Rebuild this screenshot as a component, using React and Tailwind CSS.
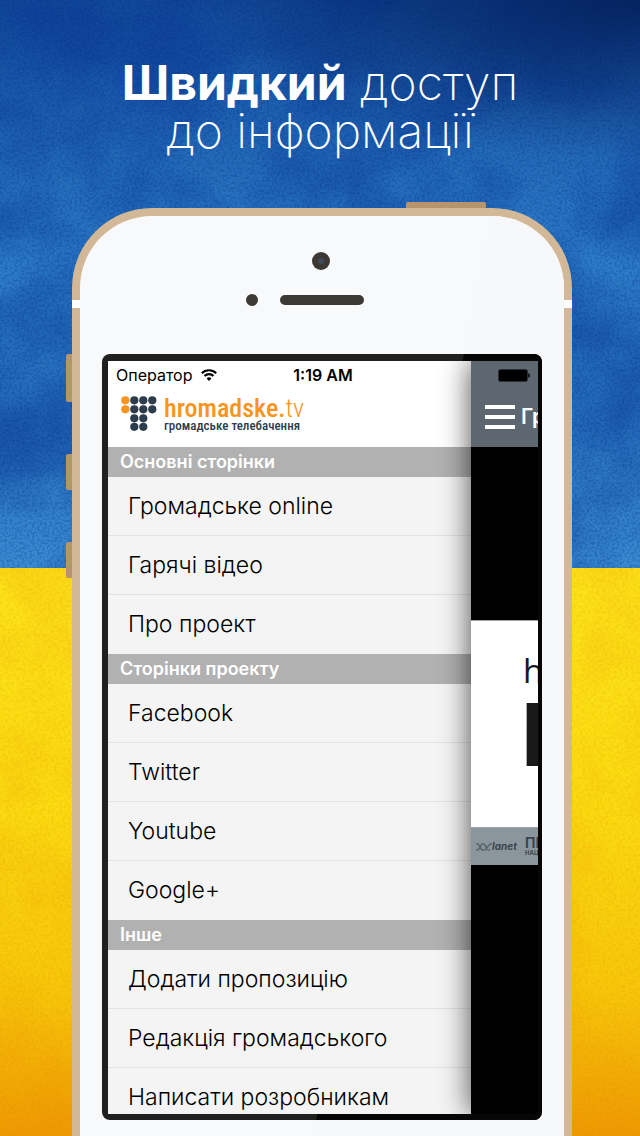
const sections = [
  { title: "Основні сторінки", items: ["Громадське online", "Гарячі відео", "Про проект"] },
  { title: "Сторінки проекту", items: ["Facebook", "Twitter", "Youtube", "Google+"] },
  { title: "Інше", items: ["Додати пропозицію", "Редакція громадського", "Написати розробникам"] },
];

function FlagBackdrop() {
  return (
    <svg className="absolute inset-0 h-full w-full" aria-hidden="true">
      <defs>
        <linearGradient id="blue" x1="0" y1="0" x2="0" y2="1">
          <stop offset="0" stopColor="#124a9c" />
          <stop offset="0.15" stopColor="#1c5dae" />
          <stop offset="0.45" stopColor="#2d7dca" />
          <stop offset="0.75" stopColor="#276fbe" />
          <stop offset="1" stopColor="#3a8cd4" />
        </linearGradient>
        <linearGradient id="yellow" x1="0" y1="0" x2="0" y2="1">
          <stop offset="0" stopColor="#fce41a" />
          <stop offset="0.4" stopColor="#fbdc12" />
          <stop offset="0.75" stopColor="#f7c60a" />
          <stop offset="1" stopColor="#ee9a04" />
        </linearGradient>
        <radialGradient id="corner" cx="1" cy="0" r="0.7">
          <stop offset="0" stopColor="#021a52" stopOpacity="0.8" />
          <stop offset="1" stopColor="#021a52" stopOpacity="0" />
        </radialGradient>
        <filter id="blotches" x="0" y="0" width="100%" height="100%" colorInterpolationFilters="sRGB">
          <feTurbulence type="fractalNoise" baseFrequency="0.01" numOctaves="6" seed="8" />
          <feColorMatrix values="0 0 0 0 0.03  0 0 0 0 0.22  0 0 0 0 0.58  2.6 0 0 0 -0.9" />
        </filter>
        <filter id="warm" x="0" y="0" width="100%" height="100%" colorInterpolationFilters="sRGB">
          <feTurbulence type="fractalNoise" baseFrequency="0.012" numOctaves="6" seed="3" />
          <feColorMatrix values="0 0 0 0 0.93  0 0 0 0 0.58  0 0 0 0 0  3 0 0 0 -1.2" />
        </filter>
        <filter id="grain" x="0" y="0" width="100%" height="100%" colorInterpolationFilters="sRGB">
          <feTurbulence type="fractalNoise" baseFrequency="0.4" numOctaves="3" seed="5" />
          <feColorMatrix values="0 0 0 0 0.02  0 0 0 0 0.15  0 0 0 0 0.45  3 0 0 0 -1.2" />
        </filter>
        <filter id="warmGrain" x="0" y="0" width="100%" height="100%" colorInterpolationFilters="sRGB">
          <feTurbulence type="fractalNoise" baseFrequency="0.35" numOctaves="3" seed="9" />
          <feColorMatrix values="0 0 0 0 0.85  0 0 0 0 0.5  0 0 0 0 0  3 0 0 0 -1.2" />
        </filter>
      </defs>
      <rect width="100%" height="50%" fill="url(#blue)" />
      <rect y="50%" width="100%" height="50%" fill="url(#yellow)" />
      <rect width="100%" height="50%" filter="url(#blotches)" opacity="0.45" />
      <rect width="100%" height="50%" filter="url(#grain)" opacity="0.25" />
      <rect width="100%" height="20%" fill="url(#corner)" />
      <rect y="50%" width="100%" height="50%" filter="url(#warm)" opacity="0.18" />
      <rect y="50%" width="100%" height="50%" filter="url(#warmGrain)" opacity="0.14" />
    </svg>
  );
}

function Wifi() {
  return (
    <svg className="h-3 w-4" viewBox="0 0 16 12" fill="none" stroke="#000" strokeWidth="2.1" aria-hidden="true">
      <path d="M0.8 4.2a10.2 10.2 0 0 1 14.4 0" />
      <path d="M3.5 7a6.4 6.4 0 0 1 9 0" />
      <path d="M8 12L5.6 9.5a3.4 3.4 0 0 1 4.8 0z" fill="#000" stroke="none" />
    </svg>
  );
}

const dots = [
  [4, 4], [13, 4], [22, 4], [31, 4],
  [4, 13], [13, 13], [22, 13], [31, 13],
  [13, 22], [22, 22],
  [13, 30.5], [22, 30.5],
];

function Logo() {
  return (
    <div className="flex gap-[7px] pl-[13px]">
      <svg className="h-[35px] w-9" viewBox="0 0 36 35" aria-hidden="true">
        {dots.map(([x, y]) => (
          <circle key={`${x}-${y}`} cx={x + 0.3} cy={y + 0.3} r="4.1" fill={x === 4 ? "#f7941d" : "#2d3c4c"} />
        ))}
      </svg>
      <div className="whitespace-nowrap font-['Roboto_Condensed','Liberation_Sans_Narrow','Roboto',sans-serif] text-[#2d3c4c]">
        <p className="text-[26px] leading-[24px] font-medium text-[#f7941d]">
          hromadske.<span className="font-light">tv</span>
        </p>
        <p className="text-[13px] leading-[12px] font-medium">громадське телебачення</p>
      </div>
    </div>
  );
}

function Menu() {
  return (
    <nav className="min-w-0 flex-1 bg-[#f4f4f4]">
      <header className="h-[86px] bg-white">
        <div className="flex h-7 items-center gap-[9px] pl-2 text-[16px]">
          Оператор <Wifi />
        </div>
        <div className="pt-[7px]">
          <Logo />
        </div>
      </header>
      {sections.map((s) => (
        <section key={s.title}>
          <h2 className="h-[30px] bg-[#b1b1b1] pl-3 text-[18px] leading-[30px] font-semibold text-white">{s.title}</h2>
          <ul>
            {s.items.map((item) => (
              <li key={item} className="h-[59px] border-b border-[#e2e2e2] last:border-b-0">
                <a href="#" className="block pl-5 text-[23px] leading-[59px] font-light whitespace-nowrap text-black">
                  {item}
                </a>
              </li>
            ))}
          </ul>
        </section>
      ))}
    </nav>
  );
}

function Page() {
  return (
    <div className="flex w-[67px] shrink-0 flex-col overflow-hidden bg-black shadow-[0_0_30px_rgba(0,0,0,0.7)]">
      <header className="h-[86px] shrink-0 bg-[#5e676f]">
        <div className="flex h-7 items-center justify-end pr-2">
          <svg className="h-[13px] w-8" viewBox="0 0 32 13" aria-hidden="true">
            <rect x="0.5" y="0.5" width="29" height="12" rx="2" fill="#000" stroke="#2b2f33" />
            <path d="M30 4.5h1a1 1 0 0 1 1 1v2a1 1 0 0 1-1 1h-1z" fill="#16181b" />
          </svg>
        </div>
        <div className="flex h-14 items-center gap-[6px] pl-[14px] text-white">
          <button type="button" aria-label="Меню" className="flex w-[30px] shrink-0 flex-col gap-[6px]">
            <span className="h-1 bg-white" />
            <span className="h-1 bg-white" />
            <span className="h-1 bg-white" />
          </button>
          <h2 className="text-[21px] font-semibold">Гр</h2>
        </div>
      </header>
      <div className="mt-[173px] flex h-[208px] shrink-0 flex-col border-y border-[#a5a0a2] bg-white text-[#111b26]">
        <p className="pt-[30px] pl-[52px] font-['Open_Sans',sans-serif] text-[33px] leading-[40px]">h</p>
        <p className="pl-[50px] text-[86px] leading-[88px] font-bold text-[#191919]">N</p>
      </div>
      <div className="flex h-[37px] shrink-0 items-center gap-2 bg-[#8b969c] pl-[5px] text-[#3a454d]">
        <p className="flex w-[41px] shrink-0 items-center text-[10px] font-bold italic">
          <svg className="h-2 w-4" viewBox="0 0 16 8" fill="none" stroke="#59656d" strokeWidth="1.5" aria-hidden="true">
            <path d="M0 1h2l4 6h2M0 7h2l4-6h2M8 1l4 6h2M7 7h2l5-6h2" />
          </svg>
          lanet
        </p>
        <div className="font-bold">
          <p className="text-[14px] leading-[12px]">ПЕ</p>
          <p className="text-[6px] leading-[8px]">НАЦ</p>
        </div>
      </div>
    </div>
  );
}

export default function App() {
  return (
    <main className="relative flex h-screen flex-col overflow-hidden bg-[#2268b6] font-['Inter','Liberation_Sans',sans-serif] text-black">
      <FlagBackdrop />
      <h1 className="relative h-[208px] shrink-0 pt-[59px] text-center text-[48px] leading-[48px] font-extralight text-white">
        <b className="font-bold">Швидкий</b> доступ
        <br />
        до інформації
      </h1>
      <div className="relative mr-[68px] ml-[72px] flex min-h-0 flex-1 flex-col">
        <span className="absolute -top-[6px] right-[86px] h-2 w-20 rounded-t-xs bg-[#b8946c]" />
        <span className="absolute top-[146px] -left-[6px] h-12 w-2 rounded-l-xs bg-[#b8946c]" />
        <span className="absolute top-[246px] -left-[6px] h-9 w-2 rounded-l-xs bg-[#b8946c]" />
        <span className="absolute top-[334px] -left-[6px] h-9 w-2 rounded-l-xs bg-[#b8946c]" />
        <div className="relative flex min-h-0 flex-1 flex-col rounded-t-[80px] bg-[#d3b897] px-2 pt-2">
          <span className="absolute inset-x-0 top-[92px] h-2 bg-white" />
          <div className="relative flex min-h-0 flex-1 flex-col overflow-hidden rounded-t-[72px] bg-[#f8f9fb] px-[22px] pb-4">
            <svg className="absolute inset-0 h-full w-full" viewBox="0 0 484 920" preserveAspectRatio="none" aria-hidden="true">
              <path d="M411 0H484V920H231z" fill="#f6f8f9" />
            </svg>
            <div className="relative flex h-[138px] shrink-0 flex-col items-center pt-9 pr-[2px]">
              <span className="flex size-[18px] items-center justify-center rounded-full bg-[#3c3833]">
                <span className="size-[6px] rounded-full bg-[#414a5a]" />
              </span>
              <div className="mt-6 flex items-center gap-[22px] pr-8">
                <span className="size-3 rounded-full bg-[#3c3833]" />
                <span className="h-[10px] w-[84px] rounded-full bg-[#3c3833]" />
              </div>
            </div>
            <div className="relative flex min-h-0 flex-1 flex-col overflow-hidden rounded-lg bg-[#22201e] pt-[7px] pr-1 pb-[6px] pl-[6px]">
              <svg className="absolute inset-0 h-full w-full" viewBox="0 0 440 766" preserveAspectRatio="none" aria-hidden="true">
                <path d="M362 0H440V766H214z" fill="#080604" />
              </svg>
              <div className="relative flex min-h-0 flex-1 overflow-hidden">
                <Menu />
                <Page />
                <p className="absolute inset-x-0 top-0 text-center text-[16px] leading-7 font-semibold">1:19 AM</p>
              </div>
            </div>
          </div>
        </div>
      </div>
    </main>
  );
}
